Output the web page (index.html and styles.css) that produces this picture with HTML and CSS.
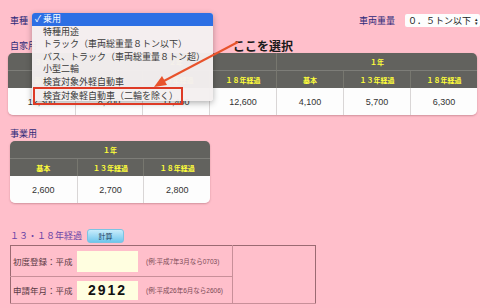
FILE: index.html
```html
<!DOCTYPE html>
<html lang="ja">
<head>
  <meta charset="UTF-8">
  <title>自動車重量税 早見表</title>
  <link rel="stylesheet" href="styles.css">
</head>
<body>
<div class="page">

  <!-- 車種 / 車両重量 -->
  <div class="top-row">
    <span class="label">車種</span>
    <div class="weight">
      <span class="label">車両重量</span>
      <div class="select-box">０．５トン以下<span class="updown">&#x25B4;<br>&#x25BE;</span></div>
    </div>
  </div>

  <!-- 自家用 -->
  <div class="label section-label">自家用</div>
  <table class="tax-table wide">
    <tr class="head1">
      <th>３年</th>
      <th colspan="3">２年</th>
      <th colspan="3">１年</th>
    </tr>
    <tr class="head2">
      <th>新車</th>
      <th>基本</th>
      <th>１３年経過</th>
      <th>１８年経過</th>
      <th>基本</th>
      <th>１３年経過</th>
      <th>１８年経過</th>
    </tr>
    <tr class="data">
      <td>12,300</td>
      <td>8,200</td>
      <td>11,400</td>
      <td>12,600</td>
      <td>4,100</td>
      <td>5,700</td>
      <td>6,300</td>
    </tr>
  </table>

  <!-- 事業用 -->
  <div class="label section-label second">事業用</div>
  <table class="tax-table narrow">
    <tr class="head1">
      <th colspan="3">１年</th>
    </tr>
    <tr class="head2">
      <th>基本</th>
      <th>１３年経過</th>
      <th>１８年経過</th>
    </tr>
    <tr class="data">
      <td>2,600</td>
      <td>2,700</td>
      <td>2,800</td>
    </tr>
  </table>

  <!-- 経過年数の計算 -->
  <div class="calc-row">
    <span class="calc-title">１３・１８年経過</span>
    <button class="calc-btn">計算</button>
  </div>
  <table class="calc-form">
    <tr class="row-first">
      <td class="f-label">初度登録：平成</td>
      <td class="f-input"><div class="input-box"></div></td>
      <td class="f-note">(例:平成7年3月なら0703)</td>
      <td class="f-empty" rowspan="2"></td>
    </tr>
    <tr class="row-second">
      <td class="f-label">申請年月：平成</td>
      <td class="f-input"><div class="input-box">2912</div></td>
      <td class="f-note">(例:平成26年6月なら2606)</td>
    </tr>
  </table>

  <!-- open select menu -->
  <div class="menu">
    <div class="menu-item active"><span class="check">✓</span>乗用</div>
    <div class="menu-item">特種用途</div>
    <div class="menu-item">トラック（車両総重量８トン以下）</div>
    <div class="menu-item">バス、トラック（車両総重量８トン超）</div>
    <div class="menu-item">小型二輪</div>
    <div class="menu-item">検査対象外軽自動車</div>
    <div class="menu-item picked">検査対象軽自動車（二輪を除く）</div>
  </div>

  <!-- annotation -->
  <div class="note-text">ここを選択</div>
  <svg class="note-arrow" width="100" height="60" viewBox="0 0 100 60">
    <line x1="88" y1="4" x2="12" y2="44" stroke="#e8532c" stroke-width="2"/>
    <polygon points="4,49 12,38 17,47" fill="#e8532c"/>
  </svg>

</div>
</body>
</html>
```

FILE: styles.css
```css
body {
  margin: 0;
  background-color: #ffbfcb;
  font-family: "Liberation Sans", "Noto Sans CJK JP", sans-serif;
}

.page {
  position: relative;
  padding: 13px 20px 0 8px;
  height: 295px;
  overflow: hidden;
}

.label {
  color: #2e2a78;
  font-size: 9px;
}

.top-row {
  display: flex;
  justify-content: space-between;
  align-items: center;
  height: 15px;
  padding-left: 2px;
}

.weight {
  display: flex;
  align-items: center;
  gap: 10px;
}

.select-box {
  display: flex;
  align-items: center;
  justify-content: space-between;
  width: 70px;
  height: 13px;
  padding: 0 2px 0 3px;
  background-color: #fdfdfd;
  color: #222;
  font-size: 9px;
  border-radius: 2px;
}

.updown {
  font-size: 5px;
  line-height: 4px;
  color: #222;
}

.section-label {
  margin-top: 12px;
  height: 13px;
  line-height: 13px;
  padding-left: 2px;
}

.section-label.second {
  margin-top: 13px;
  height: 13px;
}

.tax-table {
  border-collapse: separate;
  border-spacing: 0;
  table-layout: fixed;
  border-radius: 5px;
  overflow: hidden;
  box-shadow: 0 1px 2px rgba(120, 60, 70, 0.35);
}

.tax-table.wide {
  width: 469px;
}

.tax-table.narrow {
  width: 200px;
  margin-left: 2px;
}

.tax-table th {
  background-color: #62625e;
  color: #ffff3a;
  font-size: 7px;
  font-weight: bold;
  padding: 0;
}

.head1 th {
  height: 17px;
  border-bottom: 1px solid #7d7d78;
}

.head2 th {
  height: 17px;
  border-left: 1px solid #77776f;
}

.head2 th:first-child {
  border-left: none;
}

.head1 th + th {
  border-left: 1px solid #77776f;
}

.tax-table td {
  background-color: #fdfdfd;
  color: #333;
  font-size: 9px;
  text-align: center;
  height: 27px;
  padding: 0;
  border-left: 1px solid #d9d6d6;
}

.tax-table td:first-child {
  border-left: none;
}

.calc-row {
  display: flex;
  align-items: center;
  gap: 5px;
  margin-top: 25px;
  padding-left: 2px;
  height: 15px;
}

.calc-title {
  color: #6a45a6;
  font-size: 9px;
}

.calc-btn {
  width: 37px;
  height: 14px;
  padding: 0;
  border: 1px solid #7cc3e2;
  border-radius: 3px;
  background: linear-gradient(#c8ecfb, #6fc6ec);
  color: #1d3a5a;
  font-family: inherit;
  font-size: 7px;
}

.calc-form {
  margin: 2px 0 0 2px;
  width: 306px;
  border-collapse: collapse;
  border: 1px solid #9b6a72;
}

.calc-form td {
  padding: 0;
  border-bottom: 1px solid #c88f99;
}

.row-first td {
  height: 30px;
}

.row-second td {
  height: 26px;
}

.f-label {
  width: 64px;
  padding-left: 2px !important;
  color: #5a3a44;
  font-size: 8.5px;
  white-space: nowrap;
}

.f-input {
  width: 66px;
}

.input-box {
  width: 61px;
  height: 21px;
  background-color: #fffee0;
  color: #111;
  font-size: 14px;
  font-weight: bold;
  letter-spacing: 2px;
  line-height: 21px;
  text-align: center;
}

.row-second .input-box {
  height: 19px;
  line-height: 19px;
}

.f-note {
  width: 86px;
  color: #7a4a56;
  font-size: 6.5px;
  padding-left: 3px !important;
  white-space: nowrap;
}

.f-empty {
  border-left: 1px solid #c88f99;
}

.menu {
  position: absolute;
  left: 32px;
  top: 13px;
  width: 181px;
  height: 88px;
  background-color: rgba(244, 240, 240, 0.97);
  box-shadow: 0 2px 6px rgba(0, 0, 0, 0.3);
  border-radius: 3px;
}

.menu-item {
  height: 12.5px;
  line-height: 12.5px;
  padding-left: 11px;
  color: #3a3a3a;
  font-size: 9px;
  white-space: nowrap;
}

.menu-item.active {
  background-color: #2c6fe4;
  color: #fff;
  padding-left: 3px;
  border-radius: 3px 3px 0 0;
}

.check {
  display: inline-block;
  width: 8px;
}

.menu-item.picked {
  margin: 1px 32px 0 3px;
  padding-left: 8px;
  outline: 2px solid #de3b26;
  outline-offset: 0;
  height: 14px;
  line-height: 14px;
}

.note-text {
  position: absolute;
  left: 233px;
  top: 37px;
  font-size: 12px;
  font-weight: bold;
  color: #1a1a1a;
}

.note-arrow {
  position: absolute;
  left: 150px;
  top: 38px;
}
```
